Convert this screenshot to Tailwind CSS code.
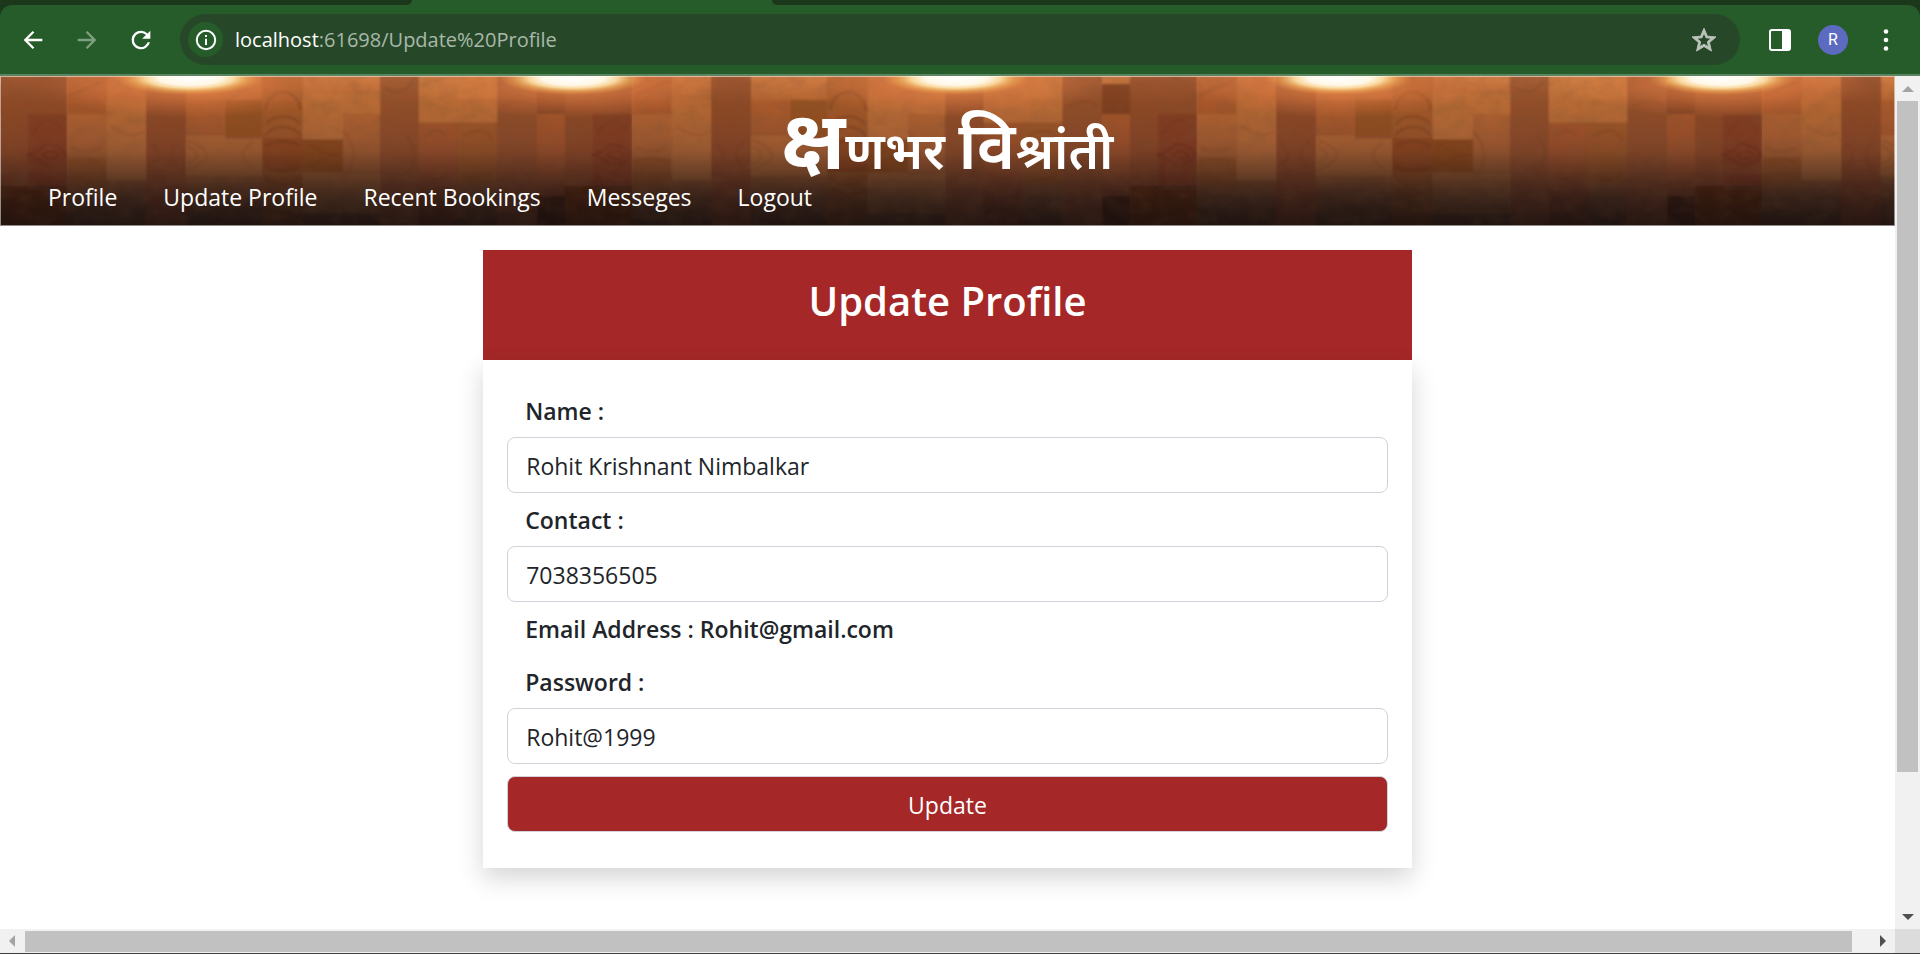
<!DOCTYPE html>
<html lang="en">
<head>
<meta charset="utf-8">
<meta name="viewport" content="width=device-width, initial-scale=1">
<title>Update Profile</title>
<script src="https://cdn.jsdelivr.net/npm/@tailwindcss/browser@4"></script>
</head>
<body class="flex h-screen flex-col overflow-hidden bg-white font-['Open_Sans','Noto_Sans',sans-serif] text-[#212529]">

<!-- Browser tab strip -->
<div class="flex h-[5px] shrink-0 bg-[#265c2a]" aria-hidden="true">
  <div class="w-[412px] rounded-br-lg bg-[#1b381b]"></div>
  <div class="w-[360px]"></div>
  <div class="flex-1 rounded-bl-lg bg-[#1b381b]"></div>
</div>

<!-- Browser toolbar -->
<div class="shrink-0 bg-[#1b381b]">
  <div class="flex h-[71px] items-center rounded-t-xl border-b-2 border-[#5a8560] bg-[#265c2a] pr-5 pl-[19px]">
    <div class="flex gap-[26px]">
      <button type="button" aria-label="Back" class="text-white"><svg class="size-7" viewBox="0 0 24 24" fill="currentColor"><path d="M20 10.900H7.800l5.300-5.300L11.700 4.200 4 12l7.700 7.800 1.400-1.400L7.800 13.100H20z"/></svg></button>
      <button type="button" aria-label="Forward" class="text-[#7d9f80]"><svg class="size-7" viewBox="0 0 24 24" fill="currentColor"><path d="M4 10.900h12.200l-5.300-5.300 1.400-1.400L20 12l-7.700 7.800-1.400-1.400 5.300-5.300H4z"/></svg></button>
      <button type="button" aria-label="Reload" class="text-white"><svg class="size-7" viewBox="0 0 24 24" fill="currentColor"><path d="M17.650 6.350A7.950 7.950 0 0 0 12 4a8 8 0 1 0 7.730 10h-2.080A6 6 0 1 1 12 6c1.660 0 3.140.690 4.220 1.780L13 11h7V4z"/></svg></button>
    </div>
    <div class="ml-[25px] flex h-[51px] flex-1 items-center rounded-full bg-[#264829] pr-5 pl-2">
      <button type="button" aria-label="Site information" class="flex size-[35px] items-center justify-center rounded-full bg-[#265c2a] text-white"><svg class="size-6" viewBox="0 0 24 24" fill="none" stroke="currentColor" stroke-width="2"><circle cx="12" cy="12" r="9.200"/><path d="M12 10.800v6.200M12 7v2"/></svg></button>
      <div class="ml-3 flex-1 text-xl leading-7 text-[#a9b8aa]"><span class="text-white">localhost</span>:61698/Update%20Profile</div>
      <button type="button" aria-label="Bookmark" class="text-[#bcc4bc]"><svg class="size-8" viewBox="0 0 24 24" fill="currentColor" stroke="currentColor" stroke-width=".7"><path d="M21 9.700l-6.470-.560L12 3.200 9.470 9.150 3 9.700l4.910 4.250L6.440 20.300 12 16.930l5.560 3.370-1.470-6.340zM12 15.100l-3.380 2.040.9-3.850-2.990-2.590 3.940-.340L12 6.740l1.540 3.630 3.940.34-2.990 2.590.9 3.850z"/></svg></button>
    </div>
    <button type="button" aria-label="Side panel" class="ml-[26px] text-white"><svg class="size-7" viewBox="0 0 28 28"><rect x="4" y="4" width="20" height="20" rx="2" fill="none" stroke="currentColor" stroke-width="2"/><path d="M16 4h8v20h-8z" fill="currentColor"/></svg></button>
    <button type="button" aria-label="Account" class="ml-6 flex size-[30px] items-center justify-center rounded-full bg-[#5c6bc0] font-[Roboto,sans-serif] text-base text-white">R</button>
    <button type="button" aria-label="Menu" class="ml-6 text-white"><svg class="size-7" viewBox="0 0 28 28" fill="currentColor"><circle cx="14" cy="5.500" r="2.300"/><circle cx="14" cy="14" r="2.300"/><circle cx="14" cy="22.500" r="2.300"/></svg></button>
  </div>
</div>

<div class="flex min-h-0 flex-1">
  <div class="min-w-0 flex-1 overflow-hidden">
    <header class="relative h-[150px] text-white">
      <!-- Lit wooden wall -->
      <svg class="absolute inset-0 size-full" aria-hidden="true">
        <defs>
          <linearGradient id="wall" x1="0" y1="0" x2="0" y2="1">
            <stop offset="0" stop-color="#d07c44"/><stop offset=".18" stop-color="#b0622f"/><stop offset=".42" stop-color="#9a562f"/><stop offset=".62" stop-color="#784529"/><stop offset=".8" stop-color="#4a2d1f"/><stop offset="1" stop-color="#231612"/>
          </linearGradient>
          <radialGradient id="glow">
            <stop offset="0" stop-color="#e88a4c" stop-opacity=".9"/><stop offset=".55" stop-color="#d87540" stop-opacity=".5"/><stop offset="1" stop-color="#d07040" stop-opacity="0"/>
          </radialGradient>
          <radialGradient id="lamp">
            <stop offset="0" stop-color="#fff"/><stop offset=".42" stop-color="#fff8e8"/><stop offset=".6" stop-color="#ffe9b0" stop-opacity=".85"/><stop offset=".78" stop-color="#f8c468" stop-opacity=".45"/><stop offset="1" stop-color="#f0a050" stop-opacity="0"/>
          </radialGradient>
          <filter id="soft" x="-5%" y="-5%" width="110%" height="110%"><feGaussianBlur stdDeviation="1"/></filter>
          <filter id="grain" x="0" y="0" width="100%" height="100%">
            <feTurbulence type="fractalNoise" baseFrequency=".06 .08" numOctaves="3" seed="11"/>
            <feColorMatrix values="0 0 0 0 .2  0 0 0 0 .08  0 0 0 0 .03  1.400 0 0 0 -.52"/>
          </filter>
          <pattern id="planks" x="67" y="0" width="565" height="150" patternUnits="userSpaceOnUse">
            <g filter="url(#soft)">
              <g fill="#5c2410">
                <rect x="0" y="0" width="40" height="38" opacity=".12"/>
                <rect x="0" y="82" width="40" height="30" opacity=".18"/>
                <rect x="79" y="0" width="40" height="150" opacity=".42"/>
                <rect x="119" y="24" width="38" height="36" opacity=".08"/>
                <rect x="158" y="24" width="37" height="39" opacity=".32"/>
                <rect x="195" y="0" width="41" height="150" opacity=".18"/>
                <rect x="195" y="62" width="41" height="34" opacity=".2"/>
                <rect x="236" y="63" width="40" height="33" opacity=".4"/>
                <rect x="313" y="0" width="39" height="150" opacity=".36"/>
                <rect x="352" y="46" width="39" height="104" opacity=".12"/>
                <rect x="391" y="46" width="39" height="62" opacity=".18"/>
                <rect x="430" y="0" width="40" height="150" opacity=".36"/>
                <rect x="470" y="8" width="28" height="30" opacity=".6"/>
                <rect x="470" y="38" width="28" height="82" opacity=".12"/>
                <rect x="498" y="0" width="67" height="150" opacity=".42"/>
                <rect x="526" y="38" width="39" height="76" opacity=".2"/>
              </g>
              <g fill="#d08a42">
                <rect x="40" y="24" width="39" height="80" opacity=".12"/>
                <rect x="119" y="60" width="76" height="40" opacity=".08"/>
                <rect x="236" y="18" width="40" height="45" opacity=".18"/>
                <rect x="276" y="18" width="37" height="20" opacity=".18"/>
                <rect x="352" y="0" width="78" height="46" opacity=".18"/>
                <rect x="391" y="0" width="39" height="22" opacity=".22"/>
                <rect x="236" y="98" width="77" height="40" opacity=".08"/>
              </g>
              <rect x="470" y="120" width="28" height="30" fill="#120805" opacity=".45"/>
              <rect x="498" y="110" width="67" height="40" fill="#120805" opacity=".25"/>
            </g>
            <g fill="none" stroke="#4a1c0c" stroke-width="2" opacity=".28" filter="url(#soft)">
              <path d="M198 34c4-24 32-24 36 0M199 48c8-10 26-10 34 0M198 60c8-12 28-12 36 0M199 70c8-6 26-6 34 0M199 90c8 6 26 6 34 0M198 100c8 12 28 12 36 0M199 112c8 10 26 10 34 0M200 128c4 16 28 16 32 0"/>
              <path d="M524 79q12-2 20-11q16 2 19 11q-3 9-19 11q-8-9-20-11zM540 79q10-8 17 0q-7 8-17 0z"/>
              <g opacity=".5"><path d="M530 58q18-26 30-4M530 100q18 26 30 4M120 70q20 9 0 18M120 64q40 15 0 30M186 66q-20 13 0 26M242 68q18 11 30 11q-12 0-30 11M276 55q22 24 0 48M84 68q14 11 0 22M112 66q-16 13 0 26M4 72q15 7 30 0M4 86q15-7 30 0"/>
              <path d="M358 60q12-10 22 0M358 98q12 10 22 0M396 60q20-12 30 4M396 98q20 12 30-4M340 60q16 19 0 38M318 12q16 10 28-6M436 30q16-10 30 0M2 20q20-10 34-14M44 50q20 14 32 6"/></g>
            </g>
          </pattern>
          <linearGradient id="shade" x1="0" y1="0" x2="0" y2="1">
            <stop offset=".5" stop-color="#1c1210" stop-opacity="0"/><stop offset="1" stop-color="#1c1210" stop-opacity=".65"/>
          </linearGradient>
          <pattern id="lamps" x="0" y="0" width="383" height="150" patternUnits="userSpaceOnUse">
            <ellipse cx="190" cy="8" rx="150" ry="34" fill="url(#glow)"/>
            <ellipse cx="190" cy="2" rx="74" ry="17" fill="url(#lamp)"/>
          </pattern>
        </defs>
        <rect width="100%" height="100%" fill="url(#wall)"/>
        <rect width="100%" height="100%" fill="url(#planks)"/>
        <rect width="100%" height="100%" filter="url(#grain)" opacity=".35"/>
        <rect width="100%" height="100%" fill="url(#shade)"/>
        <rect width="100%" height="100%" fill="url(#lamps)"/>
        <rect width="100%" height="100%" fill="none" stroke="#fff" stroke-opacity=".5" stroke-width="2"/>
      </svg>
      <div class="relative flex h-full flex-col">
        <h1 class="flex h-[100px] items-baseline justify-center text-[51px] leading-[124px] font-semibold whitespace-pre" lang="mr"><span><span class="text-[80px] font-bold">क्ष</span>णभर <span class="text-[66px]">वि</span>श्रांती</span></h1>
        <nav class="flex gap-[46px] px-12 text-[23px] leading-[42px]">
          <a href="#">Profile</a>
          <a href="#">Update Profile</a>
          <a href="#">Recent Bookings</a>
          <a href="#">Messeges</a>
          <a href="#">Logout</a>
        </nav>
      </div>
    </header>

    <main class="mx-auto mt-6 w-[49%]">
      <h2 class="h-[110px] bg-[#a52727] text-center text-[40px] leading-[102px] font-semibold text-white">Update Profile</h2>
      <form class="bg-white px-6 pt-6 pb-9 text-[23px] shadow-[0_10px_24px_rgba(0,0,0,0.17)]">
        <label for="name" class="block h-[53px] pl-[18px] leading-[55px] font-semibold">Name :</label>
        <input id="name" type="text" value="Rohit Krishnant Nimbalkar" class="block h-14 w-full rounded-lg border border-[#ced4da] px-[18px] pt-[2px]">
        <label for="contact" class="block h-[53px] pl-[18px] leading-[55px] font-semibold">Contact :</label>
        <input id="contact" type="text" value="7038356505" class="block h-14 w-full rounded-lg border border-[#ced4da] px-[18px] pt-[2px]">
        <p class="h-[53px] pl-[18px] leading-[55px] font-semibold">Email Address : Rohit@gmail.com</p>
        <label for="password" class="block h-[53px] pl-[18px] leading-[55px] font-semibold">Password :</label>
        <input id="password" type="text" value="Rohit@1999" class="block h-14 w-full rounded-lg border border-[#ced4da] px-[18px] pt-[2px]">
        <button type="submit" class="mt-3 block h-14 w-full rounded-lg border border-[#ced4da] bg-[#a52727] pt-[2px] text-white">Update</button>
      </form>
    </main>
  </div>

  <!-- Vertical scroll bar -->
  <div class="flex w-[25px] flex-col items-center bg-[#f1f1f1]" aria-hidden="true">
    <svg class="h-[25px] w-3 shrink-0" viewBox="0 0 12 25"><path d="M0 16h12L6 10z" fill="#a3a3a3"/></svg>
    <div class="flex w-[21px] flex-1 flex-col"><div class="h-[83.5%] bg-[#c1c1c1]"></div></div>
    <svg class="h-[25px] w-3 shrink-0" viewBox="0 0 12 25"><path d="M0 10h12l-6 6z" fill="#505050"/></svg>
  </div>
</div>

<!-- Horizontal scroll bar -->
<div class="flex h-[25px] shrink-0 border-b border-[#404040] bg-[#f1f1f1]" aria-hidden="true">
  <svg class="h-full w-[25px]" viewBox="0 0 25 24"><path d="M15 6v12l-6-6z" fill="#a3a3a3"/></svg>
  <div class="flex flex-1 pt-[2px] pb-px"><div class="w-[99%] bg-[#c1c1c1]"></div></div>
  <svg class="h-full w-[25px]" viewBox="0 0 25 24"><path d="M10 6v12l6-6z" fill="#505050"/></svg>
  <div class="w-[25px] bg-[#dcdcdc]"></div>
</div>
</body>
</html>
